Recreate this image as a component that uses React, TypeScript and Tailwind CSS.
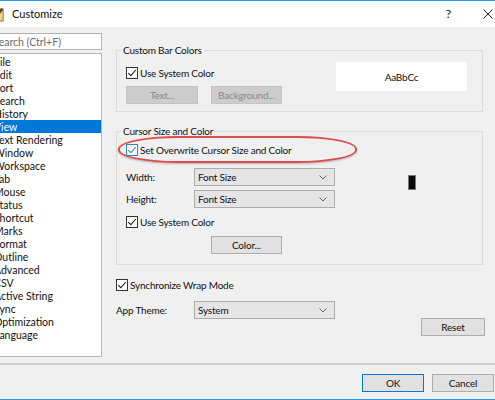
import React from "react";

const items = [
  "File",
  "Edit",
  "Sort",
  "Search",
  "History",
  "View",
  "Text Rendering",
  "Window",
  "Workspace",
  "Tab",
  "Mouse",
  "Status",
  "Shortcut",
  "Marks",
  "Format",
  "Outline",
  "Advanced",
  "CSV",
  "Active String",
  "Sync",
  "Optimization",
  "Language",
];

function CheckBox({ label, hover }: { label: string; hover?: boolean }) {
  return (
    <div className="flex h-[14px] items-center gap-[2px]">
      <span
        className={`flex h-[12px] w-[12px] shrink-0 items-center justify-center border bg-white ${
          hover ? "border-[#2f83d6]" : "border-[#333333]"
        }`}
      >
        <svg viewBox="0 0 12 12" className="h-[10px] w-[10px]">
          <path
            d="M1.5 6.2 L4.6 9.2 L10.6 2.4"
            fill="none"
            stroke={hover ? "#2f83d6" : "#222222"}
            strokeWidth="1.3"
          />
        </svg>
      </span>
      <span>{label}</span>
    </div>
  );
}

function Button({
  label,
  className,
  disabled,
}: {
  label: string;
  className: string;
  disabled?: boolean;
}) {
  return (
    <div
      className={`flex h-[18px] items-center justify-center border ${
        disabled
          ? "border-[#c4c4c4] bg-[#cccccc] text-[#8a8a8a]"
          : "border-[#adadad] bg-[#e1e1e1] text-[#111]"
      } ${className}`}
    >
      {label}
    </div>
  );
}

function Select({ value }: { value: string }) {
  return (
    <div className="flex h-[18px] w-[141px] items-center justify-between border border-[#acacac] bg-[#e5e5e5] pl-[3px] pr-[7px]">
      <span>{value}</span>
      <svg viewBox="0 0 8 5" className="h-[5px] w-[8px]">
        <path d="M0.5 0.5 L4 4 L7.5 0.5" fill="none" stroke="#555" strokeWidth="0.9" />
      </svg>
    </div>
  );
}

export default function App() {
  return (
    <div className="flex h-[400px] w-[495px] flex-col overflow-hidden bg-[#f0f0f0] font-['Lato',sans-serif] text-[10px] leading-[14px] tracking-[-0.2px] text-[#111]">
      {/* title bar */}
      <div className="flex h-[27px] shrink-0 items-center border-t border-[#2b95ec] bg-white">
        <svg viewBox="0 0 16 16" className="-ml-[10px] h-[15px] w-[15px]">
          <rect x="1" y="2" width="13" height="13" fill="#f2d58a" stroke="#8a6a3a" />
          <path d="M4 14 L13 2" stroke="#5b3a1e" strokeWidth="2.4" />
        </svg>
        <span className="ml-[7px] text-[11px] tracking-normal">Customize</span>
        <span className="ml-auto text-[12px]">?</span>
        <svg viewBox="0 0 10 10" className="ml-[32px] mr-[2px] h-[10px] w-[10px]">
          <path d="M0.5 0.5 L9.5 9.5 M9.5 0.5 L0.5 9.5" stroke="#222" strokeWidth="1" />
        </svg>
      </div>

      {/* body */}
      <div className="flex flex-1">
        {/* left nav */}
        <div className="-ml-[11px] flex w-[113px] shrink-0 flex-col text-[10.5px] tracking-normal">
          <div className="mt-[6px] flex h-[17px] items-center border border-[#b5b5b5] bg-white pl-[3px] text-[#6d6d6d]">
            Search (Ctrl+F)
          </div>
          <div className="mt-[3px] h-[304px] border border-[#b5b5b5] bg-white pt-[1px]">
            {items.map((item) => (
              <div
                key={item}
                className={`flex h-[13px] items-center pl-[4px] ${
                  item === "View" ? "bg-[#0078d7] text-white" : ""
                }`}
              >
                {item}
              </div>
            ))}
          </div>
        </div>

        {/* right panel */}
        <div className="flex flex-1 flex-col pl-[14px] pr-[12px]">
          <fieldset className="mt-[16px] border border-[#dcdcdc] pb-[7px] pl-[9px]">
            <legend className="-ml-[5px] px-[2px]">Custom Bar Colors</legend>
            <div className="flex items-start">
              <div className="flex flex-col">
                <div className="mt-[9px]">
                  <CheckBox label="Use System Color" />
                </div>
                <div className="mt-[6px] flex gap-[13px]">
                  <Button label="Text..." className="w-[72px]" disabled />
                  <Button label="Background..." className="w-[71px]" disabled />
                </div>
              </div>
              <div className="mr-[15px] ml-auto mt-[5px] flex h-[29px] w-[131px] items-center justify-center bg-white">
                AaBbCc
              </div>
            </div>
          </fieldset>

          <fieldset className="mt-[12px] border border-[#dcdcdc] pb-[10px] pl-[9px]">
            <legend className="-ml-[5px] px-[2px]">Cursor Size and Color</legend>
            <div className="flex items-start">
              <div className="flex flex-col">
                <div className="relative mt-[5px]">
                  <CheckBox label="Set Overwrite Cursor Size and Color" hover />
                  <div className="absolute -left-[8px] -top-[7px] h-[27px] w-[239px] rounded-[60px/13px] border-2 border-[#de4b4b] shadow-[0_1px_2px_rgba(0,0,0,0.25)]" />
                </div>
                <div className="mt-[11px] flex items-center">
                  <span className="w-[68px]">Width:</span>
                  <Select value="Font Size" />
                </div>
                <div className="mt-[4px] flex items-center">
                  <span className="w-[68px]">Height:</span>
                  <Select value="Font Size" />
                </div>
                <div className="mt-[7px]">
                  <CheckBox label="Use System Color" />
                </div>
                <div className="mt-[7px] flex">
                  <Button label="Color..." className="ml-[85px] w-[71px]" />
                </div>
              </div>
              <div className="ml-[73px] mt-[37px] h-[15px] w-[8px] border border-[#777] bg-[#0a0a0a]" />
            </div>
          </fieldset>

          <div className="mt-[13px]">
            <CheckBox label="Synchronize Wrap Mode" />
          </div>
          <div className="mt-[9px] flex items-center">
            <span className="w-[78px]">App Theme:</span>
            <Select value="System" />
          </div>
          <div className="-mr-[2px] -mt-[1px] flex justify-end">
            <Button label="Reset" className="w-[64px]" />
          </div>
        </div>
      </div>

      {/* footer */}
      <div className="flex h-[37px] shrink-0 items-start justify-end gap-[8px] border-t-2 border-b border-t-[#cdcdcd] border-b-[#2b95ec] pr-[1px] pt-[9px]">
        <Button label="OK" className="w-[62px] !border-[#0078d7]" />
        <Button label="Cancel" className="w-[62px]" />
      </div>
    </div>
  );
}
